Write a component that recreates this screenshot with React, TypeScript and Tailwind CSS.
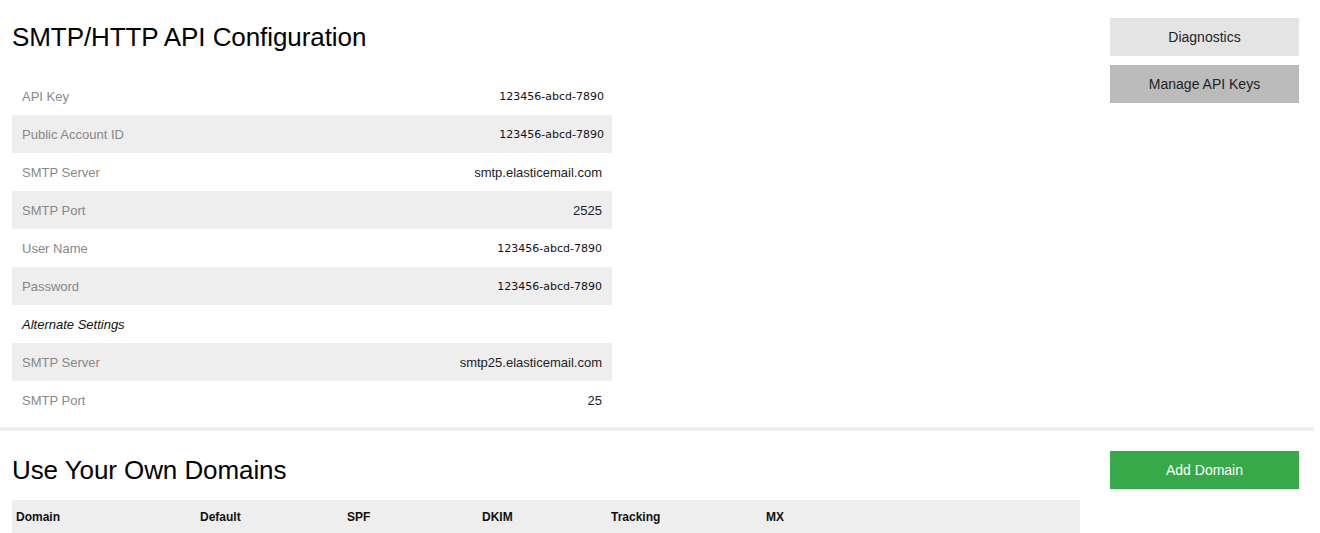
import React from 'react'

type Row = { label: string; value: string; mono?: boolean; tight?: boolean; heading?: boolean }

const rows: Row[] = [
  { label: 'API Key', value: '123456-abcd-7890', mono: true, tight: true },
  { label: 'Public Account ID', value: '123456-abcd-7890', mono: true, tight: true },
  { label: 'SMTP Server', value: 'smtp.elasticemail.com' },
  { label: 'SMTP Port', value: '2525' },
  { label: 'User Name', value: '123456-abcd-7890', mono: true },
  { label: 'Password', value: '123456-abcd-7890', mono: true },
  { label: 'Alternate Settings', value: '', heading: true },
  { label: 'SMTP Server', value: 'smtp25.elasticemail.com' },
  { label: 'SMTP Port', value: '25' },
]

const domainCols = ['Domain', 'Default', 'SPF', 'DKIM', 'Tracking', 'MX']

export default function App() {
  return (
    <div className="min-h-screen bg-white text-[#111] font-['Liberation_Sans',Arial,sans-serif]">
      {/* API config */}
      <section className="flex pt-[18px] pb-[8px] pl-[12px] pr-[21px]">
        <div className="w-[600px]">
          <h1 className="h-[38px] leading-[38px] text-[26px] font-normal tracking-[-0.08px] text-black">SMTP/HTTP API Configuration</h1>
          <div className="mt-[21px]">
            {rows.map((r, i) => (
              <div key={i}
                className={`flex items-center justify-between h-[38px] pt-[2px] pl-[10px] ${r.tight ? 'pr-[8px]' : 'pr-[10px]'} ${i % 2 === 1 ? 'bg-[#eeeeee]' : 'bg-white'}`}>
                <span className={r.heading ? 'text-[13px] italic text-[#111]' : 'text-[13px] text-[#888]'}>{r.label}</span>
                {r.value && (
                  <span className={r.mono
                    ? "text-[11px] text-[#111] font-['DejaVu_Sans',sans-serif]"
                    : 'text-[13px] text-[#222]'}>
                    {r.value}
                  </span>
                )}
              </div>
            ))}
          </div>
        </div>
        <div className="ml-auto flex w-[189px] flex-col gap-[9px]">
          <button className="h-[38px] bg-[#e4e4e4] text-[14px] text-[#222]">Diagnostics</button>
          <button className="h-[38px] bg-[#bbbbbb] text-[14px] text-[#222]">Manage API Keys</button>
        </div>
      </section>

      <div className="h-[4px] w-[1314px] bg-[#eeeeee]" />

      {/* Domains */}
      <section className="pt-[20px] pl-[12px] pr-[21px]">
        <div className="flex items-center">
          <h2 className="h-[38px] leading-[38px] text-[26px] font-normal tracking-[-0.08px] text-black">Use Your Own Domains</h2>
          <button className="ml-auto h-[38px] w-[189px] bg-[#38a949] text-[14px] text-white">Add Domain</button>
        </div>
        <div className="mt-[11px] w-[1068px] bg-[#eeeeee] grid grid-cols-[184px_147px_135px_129px_155px_1fr] h-[34px] items-center">
          {domainCols.map(c => (
            <div key={c} className="pl-[4px] text-[12px] font-bold text-[#111]">{c}</div>
          ))}
        </div>
      </section>
    </div>
  )
}
